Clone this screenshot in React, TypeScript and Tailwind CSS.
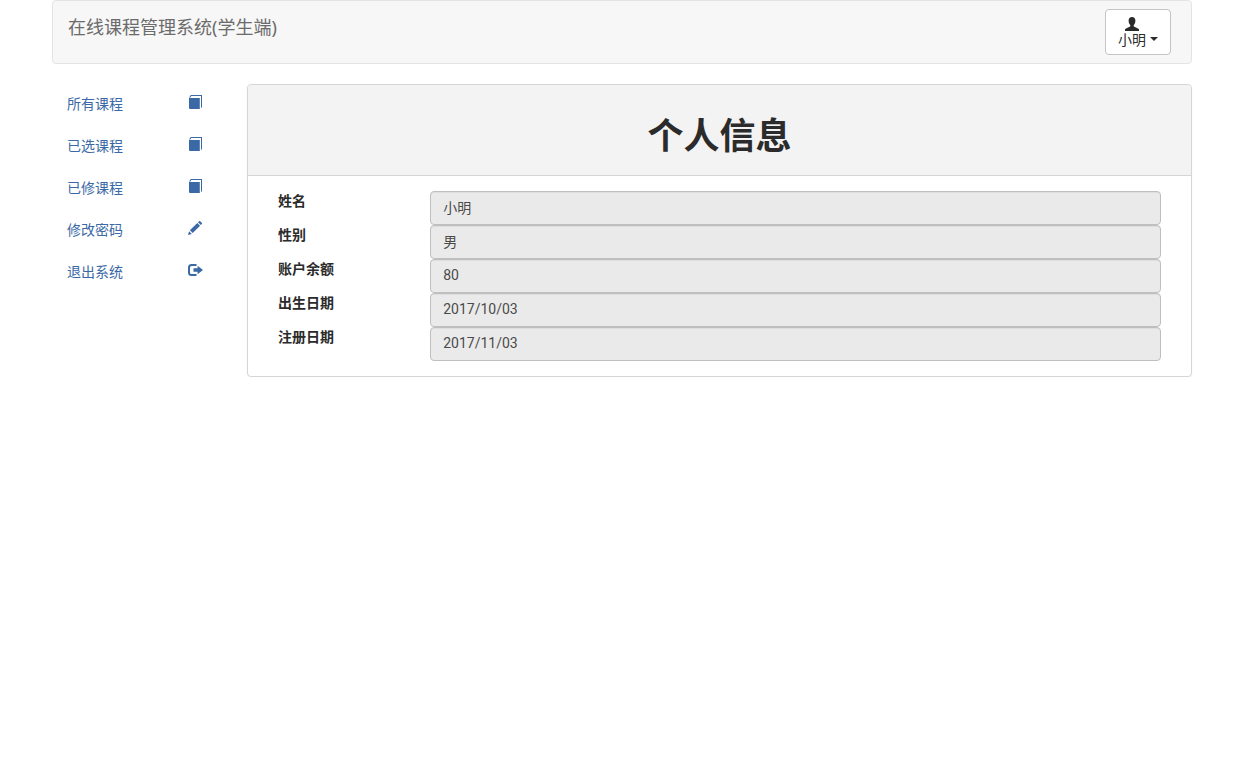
import React from 'react';

const menu = [
  { title: '所有课程', icon: 'book' },
  { title: '已选课程', icon: 'book' },
  { title: '已修课程', icon: 'book' },
  { title: '修改密码', icon: 'pencil' },
  { title: '退出系统', icon: 'logout' },
];

const fields = [
  { id: 'name', label: '姓名', value: '小明' },
  { id: 'gender', label: '性别', value: '男' },
  { id: 'balance', label: '账户余额', value: '80' },
  { id: 'birthday', label: '出生日期', value: '2017/10/03' },
  { id: 'registered', label: '注册日期', value: '2017/11/03' },
];

function MenuIcon({ name }: { name: string }) {
  return (
    <svg viewBox="0 0 16 16" className="w-4 h-4" fill="currentColor" aria-hidden="true">
      {name === 'book' && (
        <>
          <path d="M2 4h10.800v11H3q-1 0-1-1z" />
          <path d="M2 3.600 3.800 1H15v12.300l-1 .7V2H4.300L3.300 3.600z" />
        </>
      )}
      {name === 'pencil' && (
        <>
          <path d="M1 15l1.100-3.800 2.700 2.700z" />
          <path d="M2.900 10.300 10.300 2.900l2.800 2.800-7.400 7.400z" />
          <path d="M11 2.200l1-1q.6-.5 1.200 0l1.600 1.600q.5.600 0 1.200l-1 1z" />
        </>
      )}
      {name === 'logout' && (
        <>
          <path
            d="M9.500 3H4.500Q2 3 2 5.500v5Q2 13 4.500 13h5"
            fill="none"
            stroke="currentColor"
            strokeWidth="2"
          />
          <path d="M10.600 3.800 16 8l-5.400 4.200V9.700H6.500V6.300h4.100z" />
        </>
      )}
    </svg>
  );
}

function UserIcon() {
  return (
    <svg viewBox="0 0 14 14" className="w-3.5 h-3.5" fill="currentColor" aria-hidden="true">
      <path d="M7 0c2.200 0 3.400 1.500 3.400 3.700 0 1.900-.7 3.500-1.700 4.400v.8c0 .5.300.7.700.9l3.600 1.600c.7.300 1 .7 1 1.300V14H0v-1.300c0-.6.300-1 1-1.300l3.600-1.600c.4-.2.700-.4.700-.9v-.8c-1-.9-1.700-2.500-1.700-4.400C3.600 1.500 4.800 0 7 0z" />
    </svg>
  );
}

export default function App() {
  return (
    <div className="max-w-[1170px] mx-auto px-[15px] font-['Roboto','Noto_Sans_CJK_SC',sans-serif] text-sm text-[#2b2b2b]">
      <header className="flex items-start justify-between h-16 mb-5 pl-[15px] pr-5 bg-[#f7f7f7] border border-[#e3e3e3] rounded">
        <a href="#" className="mt-4 font-['Noto_Sans','Noto_Sans_CJK_SC',sans-serif] text-lg leading-5 text-[#6b6b6b]">
          在线课程管理系统(学生端)
        </a>
        <button
          type="button"
          className="flex items-end gap-1 mt-2 px-3 pt-[7px] pb-[5px] bg-white border border-[#c4c4c4] rounded"
        >
          <span className="flex flex-col items-center">
            <UserIcon />
            <span className="leading-[18px]">小明</span>
          </span>
          <span className="mb-2 border-x-4 border-t-4 border-x-transparent border-t-[#2b2b2b]" />
        </button>
      </header>

      <div className="flex items-start gap-[30px]">
        <nav className="w-[165px] shrink-0">
          <ul className="flex flex-col gap-0.5">
            {menu.map((item) => (
              <li key={item.title}>
                <a href="#" className="flex justify-between pl-[15px] pr-3.5 py-2.5 leading-5 text-[#3a69a6]">
                  {item.title}
                  <MenuIcon name={item.icon} />
                </a>
              </li>
            ))}
          </ul>
        </nav>

        <main className="flex-1 bg-white border border-[#d6d6d6] rounded shadow-xs">
          <div className="px-[15px] pt-8 pb-[18px] bg-[#f3f3f3] border-b border-[#d6d6d6] rounded-t">
            <h1 className="text-center text-4xl font-bold leading-10">个人信息</h1>
          </div>
          <form className="p-[15px]">
            {fields.map((field) => (
              <div key={field.id} className="grid grid-cols-12">
                <label htmlFor={field.id} className="col-span-2 pl-[15px] font-bold leading-5">
                  {field.label}
                </label>
                <div className="col-span-10 px-[15px]">
                  <input
                    id={field.id}
                    type="text"
                    readOnly
                    defaultValue={field.value}
                    className="block w-full h-[34px] px-3 pt-1 pb-1.5 leading-5 text-[#4a4a4a] bg-[#eaeaea] border border-[#bfbfbf] rounded inset-shadow-2xs"
                  />
                </div>
              </div>
            ))}
          </form>
        </main>
      </div>
    </div>
  );
}
